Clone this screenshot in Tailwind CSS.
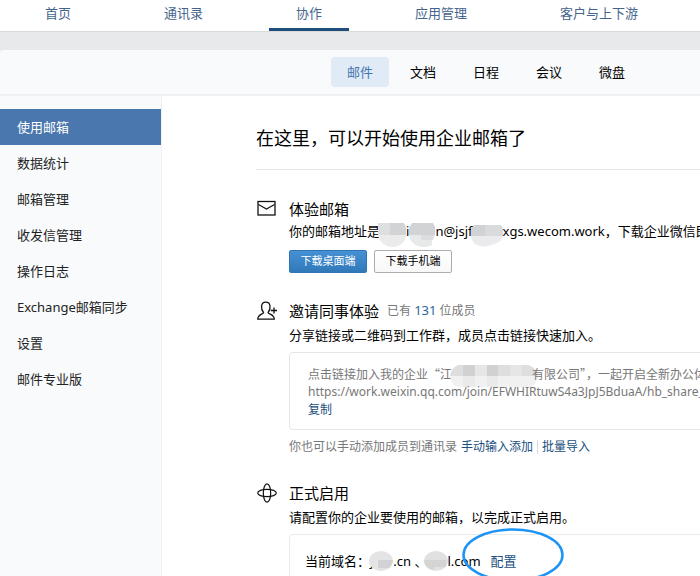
<!DOCTYPE html>
<html lang="zh-CN">
<head>
  <meta charset="UTF-8">
  <meta name="viewport" content="width=device-width, initial-scale=1.0">
  <title>企业邮箱</title>
  <script src="https://cdn.jsdelivr.net/npm/@tailwindcss/browser@4"></script>
</head>
<body class="h-screen overflow-hidden bg-[#e8e9ea] font-['Noto_Sans','Noto_Sans_CJK_SC',sans-serif] text-[13px] text-black whitespace-nowrap">
  <div class="flex h-full flex-col overflow-hidden">

    <!-- Top navigation -->
    <nav class="flex h-8 shrink-0 gap-[39px] border-b border-[#d9dadb] bg-white pl-[18px] leading-[26px] text-[#45658d]">
      <a href="#" class="px-[27px]">首页</a>
      <a href="#" class="px-[27px]">通讯录</a>
      <a href="#" class="border-b-[3px] border-[#1f4d7c] px-[27px]">协作</a>
      <a href="#" class="px-[27px]">应用管理</a>
      <a href="#" class="px-[27px]">客户与上下游</a>
    </nav>

    <div class="mt-[18px] flex grow flex-col rounded-tl-sm bg-white">
      <!-- Tabs -->
      <nav class="flex h-[46px] shrink-0 items-center gap-[5px] rounded-tl-sm border-b-2 border-[#eef0f3] bg-[#f8fafc] pl-[331px] text-center leading-[30px]">
        <a href="#" class="w-[58px] rounded bg-[#e0ebf7] text-[#4476ad]">邮件</a>
        <a href="#" class="w-[58px]">文档</a>
        <a href="#" class="w-[58px]">日程</a>
        <a href="#" class="w-[58px]">会议</a>
        <a href="#" class="w-[58px]">微盘</a>
      </nav>

      <div class="flex grow">
        <!-- Sidebar -->
        <aside class="flex w-[162px] shrink-0 flex-col border-r border-[#eef0f3] bg-[#f8fafc] pt-[13px] leading-9 text-[#222]">
          <a href="#" class="bg-[#4a77ad] pl-[17px] text-white">使用邮箱</a>
          <a href="#" class="pl-[17px]">数据统计</a>
          <a href="#" class="pl-[17px]">邮箱管理</a>
          <a href="#" class="pl-[17px]">收发信管理</a>
          <a href="#" class="pl-[17px]">操作日志</a>
          <a href="#" class="pl-[17px]">Exchange邮箱同步</a>
          <a href="#" class="pl-[17px]">设置</a>
          <a href="#" class="pl-[17px]">邮件专业版</a>
        </aside>

        <main class="min-w-0 grow overflow-hidden pl-[94px]">
          <h1 class="border-b border-[#e6e6e6] pt-7 pb-[17px] text-lg leading-7">在这里，可以开始使用企业邮箱了</h1>

          <!-- Try the mailbox -->
          <section class="mt-[27px] flex">
            <div class="w-[33px] shrink-0 pt-[3px]">
              <svg class="ml-px h-[17px] w-5" viewBox="0 0 20 17" fill="none" stroke="#111">
                <rect x="1" y="1.5" width="17" height="13.5" stroke-width="1.3"/>
                <path d="M1.5 4.5L9.5 9L17.5 4.5" stroke-width="1.1"/>
              </svg>
            </div>
            <div class="min-w-0 grow">
              <h2 class="text-[15px] leading-6">体验邮箱</h2>
              <p class="flex h-5 items-center leading-5">
                <span>你的邮箱地址是</span>
                <svg class="mt-2 -ml-0.5 h-6 w-7 shrink-0" viewBox="0 0 26 24" preserveAspectRatio="none">
                  <path d="M0 0h24l2 4v8H0z" fill="#d2d3d5"/><path d="M0 12h26c0 8-7 12-13 12S1 19 0 12z" fill="#ebebeb"/><path d="M0 0h11v12H0z" fill="#dedfe0"/>
                </svg>
                <span>i</span>
                <svg class="mt-2 h-6 w-[26px] shrink-0" viewBox="0 0 26 24">
                  <path d="M3 0h21l2 4v8H0V5z" fill="#d2d3d4"/><path d="M0 12h26c0 2-1 4-3 6v4c-8 5-22 1-23-10z" fill="#e8e9e9"/><path d="M12 12h12v5H12z" fill="#dddddf"/>
                </svg>
                <span>n@jsjf</span>
                <svg class="mt-2 -ml-0.5 h-6 w-8 shrink-0" viewBox="0 0 32 24">
                  <path d="M3 2h27l2 4v7H0V6z" fill="#d0d2d5"/><path d="M14 2h16l2 4v7H14z" fill="#d9dadb"/><path d="M0 13h32c-1 5-5 7-9 8-8 4-22 4-23-8z" fill="#ebebed"/>
                </svg>
                <span>xgs.wecom.work，下载企业微信即</span>
              </p>
              <div class="mt-[9px] flex gap-[7px] text-[11px]">
                <button class="h-[23px] w-[78px] rounded-xs border border-[#2f74b5] bg-linear-to-b from-[#4690d4] to-[#3079b9] text-white">下载桌面端</button>
                <button class="h-[23px] w-[78px] rounded-xs border border-[#adadad] bg-linear-to-b from-white to-[#f8f8f8]">下载手机端</button>
              </div>
            </div>
          </section>

          <!-- Invite colleagues -->
          <section class="mt-[26px] flex">
            <div class="w-[33px] shrink-0 pt-[2px]">
              <svg class="ml-px h-5 w-5" viewBox="0 0 20 20" fill="none" stroke="#111" stroke-width="1.3">
                <path d="M6.5 11.5C4.8 9.5 4.3 7.3 4.6 5C4.9 2.6 6.8 1.2 8.8 1.2S12.7 2.6 13 5C13.3 7.3 12.8 9.5 11.1 11.5C11.3 13.6 17.3 13 17.3 18.2H.8C.8 13 6.3 13.6 6.5 11.5Z"/>
                <path d="M13.8 9.5H20M17 6.5v6"/>
              </svg>
            </div>
            <div class="min-w-0 grow">
              <div class="flex items-center leading-6">
                <h2 class="text-[15px]">邀请同事体验</h2>
                <p class="ml-2 text-xs text-[#777]">已有 <a href="#" class="text-[13px] text-[#2b659e]">131</a> 位成员</p>
              </div>
              <p class="leading-6">分享链接或二维码到工作群，成员点击链接快速加入。</p>
              <div class="mt-[5px] -mr-1 rounded-sm border border-[#e4e6e9] px-[18px] pt-3 pb-2.5 text-xs leading-[18px] text-[#777]">
                <p class="flex h-[18px] items-center font-['Noto_Sans_CJK_SC',sans-serif]">
                  <span>点击链接加入我的企业“江苏</span>
                  <svg class="mt-1 -ml-3.5 h-[22px] w-[88px] shrink-0" viewBox="0 0 88 22">
                    <path d="M8 0h70q9 3 10 11H0Q1 3 8 0z" fill="#dedede"/>
                    <path d="M13 0h12v11H13zM37 0h11v11H37z" fill="#d1d1d2"/>
                    <path d="M25 0h12v11H25zM60 0h12v11H60z" fill="#e6e6e6"/>
                    <path d="M0 11h88q-1 9-8 11H8Q1 20 0 11z" fill="#f1f1f1"/>
                    <path d="M13 11h12v11H13zM37 11h11v11H37z" fill="#eaeaea"/>
                  </svg>
                  <span class="-ml-1.5">有限公司”，一起开启全新办公体</span>
                </p>
                <p>https://work.weixin.qq.com/join/EFWHIRtuwS4a3JpJ5BduaA/hb_share_</p>
                <button class="block text-[#1b4f80]">复制</button>
              </div>
              <p class="mt-2 flex items-center text-xs leading-[18px] text-[#777]">
                <span>你也可以手动添加成员到通讯录</span>
                <a href="#" class="ml-1 text-[#1b4f80]">手动输入添加</a>
                <a href="#" class="ml-1 border-l border-[#d5dbe1] pl-1 leading-[14px] text-[#1b4f80]">批量导入</a>
              </p>
            </div>
          </section>

          <!-- Activate -->
          <section class="mt-[25px] flex">
            <div class="w-[33px] shrink-0 pt-[2px]">
              <svg class="h-5 w-[22px]" viewBox="0 0 22 20" fill="none" stroke="#111" stroke-width="1.2">
                <ellipse cx="11" cy="10" rx="9.3" ry="3.7"/>
                <ellipse cx="11" cy="10" rx="3.7" ry="9.2"/>
              </svg>
            </div>
            <div class="min-w-0 grow">
              <h2 class="text-[15px] leading-6">正式启用</h2>
              <p class="leading-6">请配置你的企业要使用的邮箱，以完成正式启用。</p>
              <div class="mt-[5px] -mr-1 rounded-sm border border-[#e9eaec] px-[15px] py-[15px]">
                <p class="flex h-[22px] items-center leading-[22px]">
                  <span>当前域名：j</span>
                  <svg class="-ml-1 h-5 w-6 shrink-0" viewBox="0 0 24 20">
                    <ellipse cx="12" cy="10" rx="12" ry="10" fill="#e4e4e4"/><path d="M9 9h15c-1 4-2 6-4 8H9z" fill="#d2d2d4"/>
                  </svg>
                  <span>.cn 、</span>
                  <svg class="-ml-1 h-5 w-6 shrink-0" viewBox="0 0 24 20">
                    <ellipse cx="12" cy="10" rx="12" ry="10" fill="#e1e1e1"/><path d="M0 9h10v10C4 18 0 14 0 9zM10 9h12v7H10z" fill="#d5d4d4"/>
                  </svg>
                  <span>l.com</span>
                  <a href="#" class="relative ml-2.5 text-[#1b4f80]">配置
                    <svg class="absolute -top-[22px] -left-[29px] h-[54px] w-[102px]" viewBox="0 0 102 54" fill="none" stroke="#1c93f5" stroke-width="2.5">
                      <ellipse cx="51" cy="27" rx="49.5" ry="25.5"/>
                    </svg>
                  </a>
                </p>
              </div>
            </div>
          </section>
        </main>
      </div>
    </div>
  </div>
</body>
</html>
